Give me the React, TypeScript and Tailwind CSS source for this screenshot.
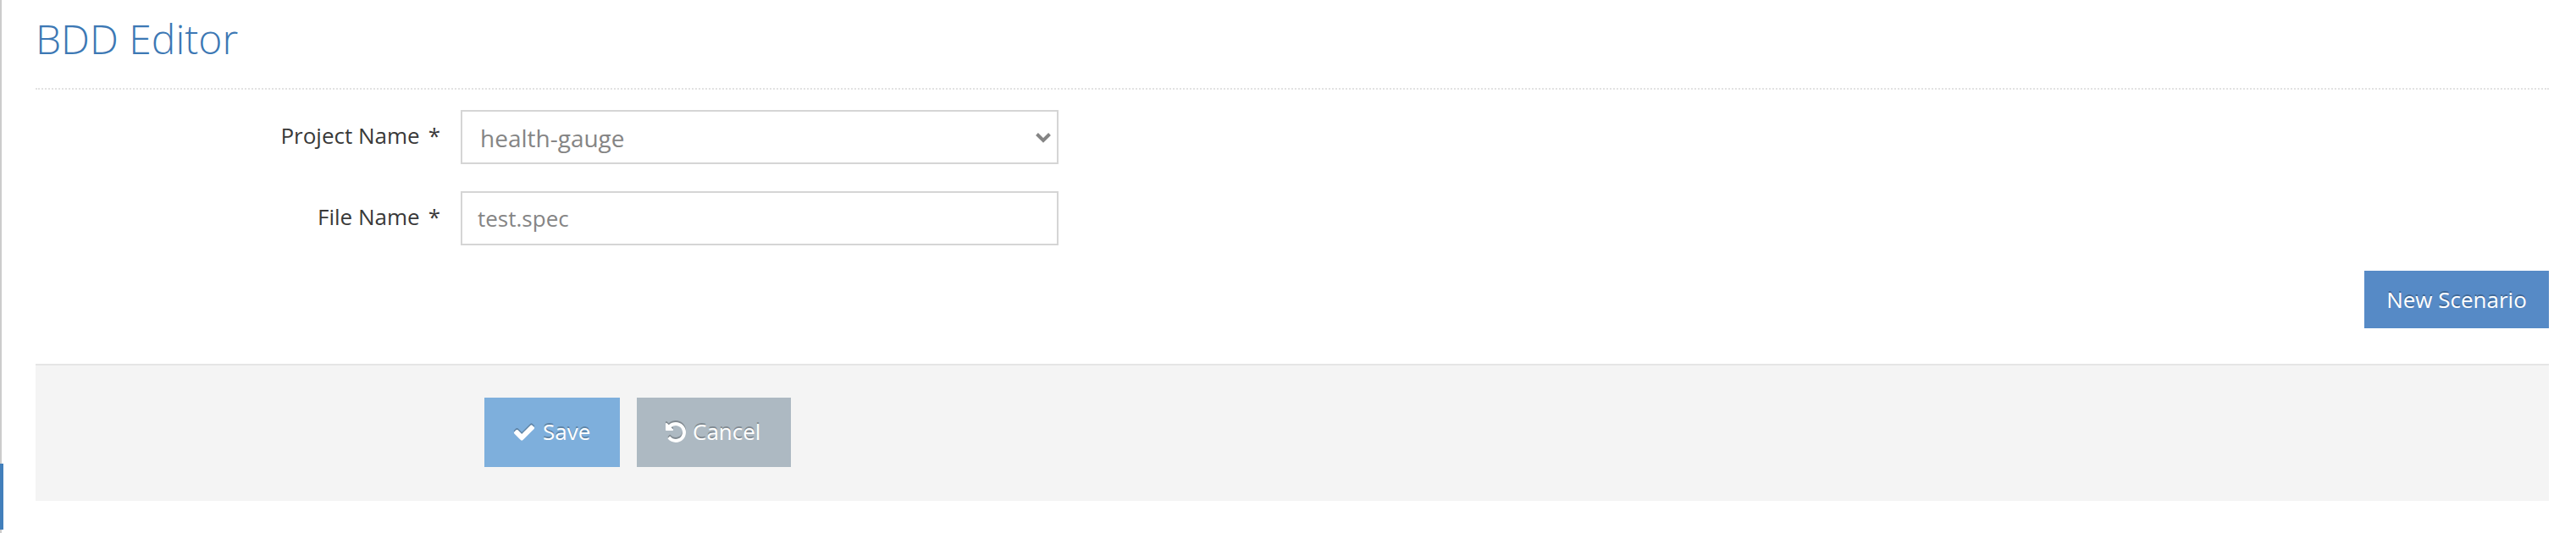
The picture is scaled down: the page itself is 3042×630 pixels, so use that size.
import type { ReactNode } from "react";

function CheckIcon() {
  return (
    <svg viewBox="0 0 1792 1792" fill="currentColor" className="h-7 w-7 shrink-0 drop-shadow-[0_-2px_0_rgba(0,0,0,0.25)]">
      <path d="M1671 566q0 40-28 68l-724 724-136 136q-28 28-68 28t-68-28l-136-136-362-362q-28-28-28-68t28-68l136-136q28-28 68-28t68 28l294 295 656-657q28-28 68-28t68 28l136 136q28 28 28 68z" />
    </svg>
  );
}

function UndoIcon() {
  return (
    <svg viewBox="0 0 1792 1792" fill="currentColor" className="h-7 w-7 shrink-0 drop-shadow-[0_-2px_0_rgba(0,0,0,0.25)]">
      <path d="M1664 896q0 156-61 298t-164 245-245 164-298 61q-172 0-327-72.5t-264-204.5q-7-10-6.5-22.5t8.5-20.5l137-138q10-9 25-9 16 2 23 12 73 95 179 147t225 52q104 0 198.5-40.5t163.5-109.5 109.5-163.5 40.5-198.5-40.5-198.5-109.5-163.5-163.5-109.5-198.5-40.5q-98 0-188 35.5t-160 101.5l137 138q31 30 14 69-17 40-59 40h-448q-26 0-45-19t-19-45v-448q0-42 40-59 39-17 69 14l130 129q107-101 244.5-156.5t284.5-55.5q156 0 298 61t245 164 164 245 61 298z" />
    </svg>
  );
}

function Field({ label, children }: { label: string; children: ReactNode }) {
  return (
    <div className="flex h-16">
      <label className="mr-6 flex w-[478px] justify-end gap-2.5 pt-3 text-[26px] leading-[36px] text-[#393939]">
        <span>{label}</span>
        <span>*</span>
      </label>
      {children}
    </div>
  );
}

export default function App() {
  return (
    <div className="flex h-[630px] w-full bg-white font-['Open_Sans',sans-serif]">
      <div className="flex w-1 shrink-0 flex-col items-start">
        <div className="h-[548px] w-0.5 bg-[#cccccc]" />
        <div className="h-[78px] w-1 bg-[#427fbb]" />
        <div className="h-1 w-0.5 bg-[#cccccc]" />
      </div>
      <main className="ml-[38px] mr-8 min-w-0 flex-1">
        <header className="h-[106px] border-b-2 border-dotted border-[#e2e2e2] pt-[13px]">
          <h1 className="text-[48px] font-light leading-[66px] text-[#3c78b4]">BDD Editor</h1>
        </header>
        <form className="pt-6">
          <Field label="Project Name">
            <div className="flex w-[706px] items-center justify-between border-2 border-[#d5d5d5] pl-[21px] pr-[7px] pt-0.5 text-[#858585]">
              <span className="text-[28px] leading-[38px]">health-gauge</span>
              <svg viewBox="0 0 18 12" className="h-3 w-[18px]" fill="none" stroke="currentColor" strokeWidth="4">
                <path d="M1.5 1.5 9 9l7.5-7.5" />
              </svg>
            </div>
          </Field>
          <div className="h-8" />
          <Field label="File Name">
            <input
              defaultValue="test.spec"
              className="w-[706px] border-2 border-[#d5d5d5] px-[18px] text-[26px] text-[#858585] outline-none"
            />
          </Field>
          <div className="flex justify-end pt-[30px]">
            <button type="button" className="h-[68px] w-[218px] bg-[#568ac6] text-[26px] text-white [text-shadow:0_-2px_0_rgba(0,0,0,0.25)]">
              New Scenario
            </button>
          </div>
          <div className="mt-[42px] flex h-[162px] gap-5 border-t-2 border-[#e5e5e5] bg-[#f4f4f4] pl-[530px] pt-[38px]">
            <button type="button" className="flex h-[82px] w-40 items-center gap-2 bg-[#7eafdc] pl-[33px] text-[26px] text-white [text-shadow:0_-2px_0_rgba(0,0,0,0.25)]">
              <CheckIcon />
              <span className="pb-0.5">Save</span>
            </button>
            <button type="button" className="flex h-[82px] w-[182px] items-center gap-1.5 bg-[#adb9c2] pl-8 text-[26px] text-white [text-shadow:0_-2px_0_rgba(0,0,0,0.25)]">
              <UndoIcon />
              <span className="pb-0.5">Cancel</span>
            </button>
          </div>
        </form>
      </main>
    </div>
  );
}
